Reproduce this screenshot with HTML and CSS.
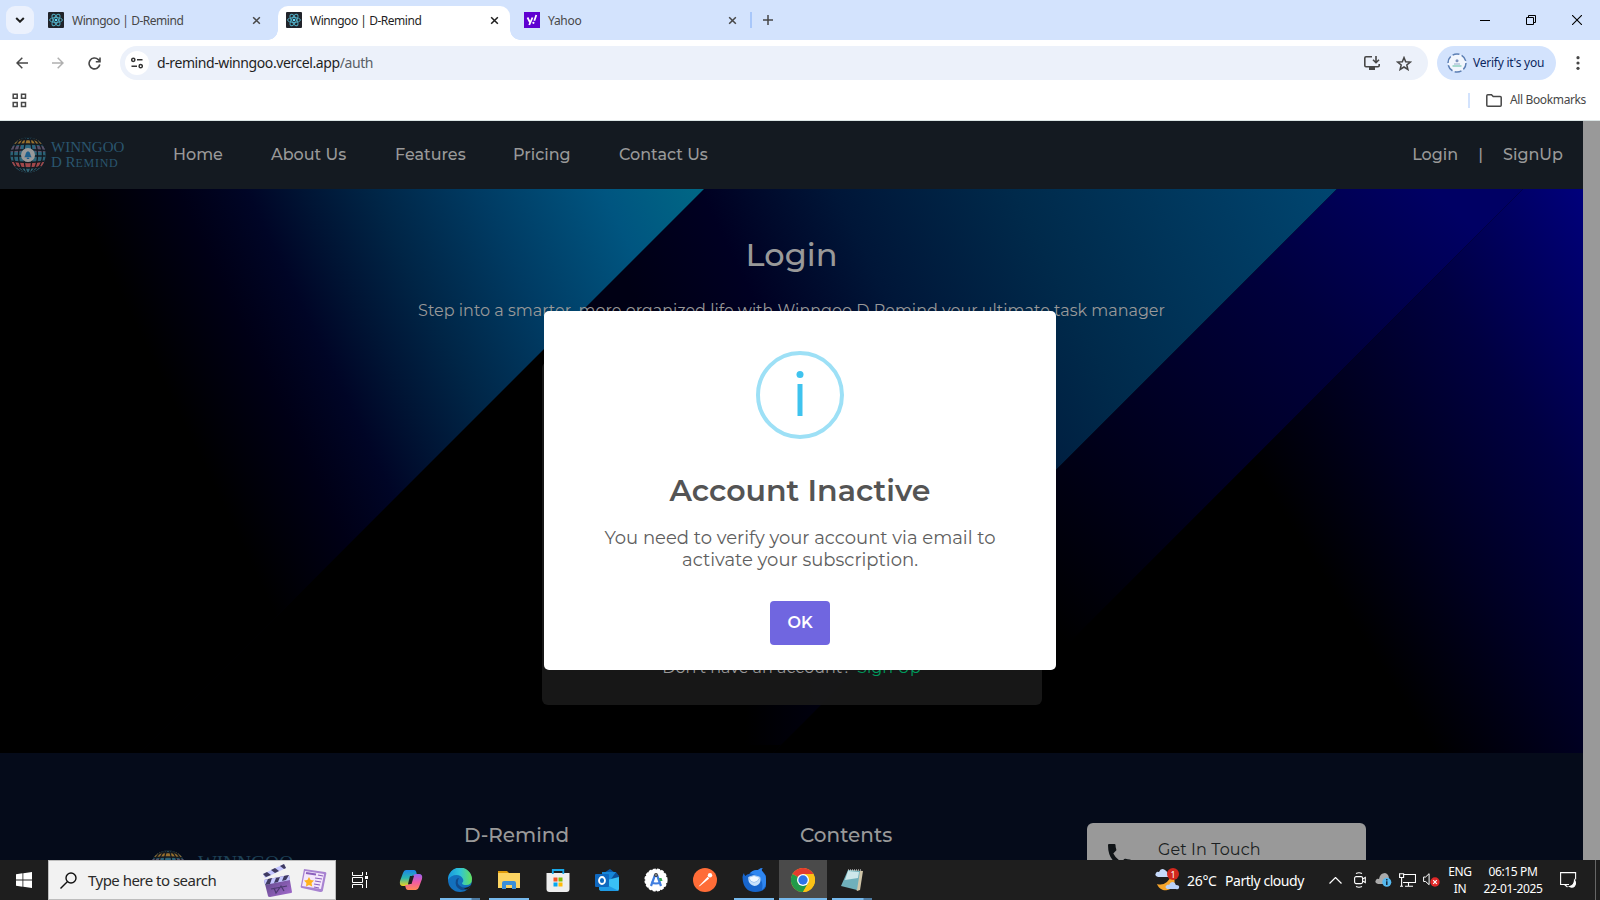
FILE: index.html
```html
<!DOCTYPE html>
<html lang="en">
<head>
<meta charset="utf-8">
<title>Winngoo | D-Remind</title>
<link rel="stylesheet" href="styles.css">
</head>
<body>
<svg class="defs" width="0" height="0">
  <defs>
    <symbol id="react" viewBox="0 0 16 16">
      <rect width="16" height="16" rx="1" fill="#20232a"/>
      <g fill="none" stroke="#4fa9bf" stroke-width="1">
        <ellipse cx="8" cy="8" rx="6.4" ry="2.5"/>
        <ellipse cx="8" cy="8" rx="6.4" ry="2.5" transform="rotate(60 8 8)"/>
        <ellipse cx="8" cy="8" rx="6.4" ry="2.5" transform="rotate(120 8 8)"/>
      </g>
      <circle cx="8" cy="8" r="1.3" fill="#61dafb"/>
    </symbol>
    <symbol id="close" viewBox="0 0 10 10"><path d="M1.3 1.3 8.7 8.7M8.7 1.3 1.3 8.7" fill="none" stroke="currentColor" stroke-width="1.7"/></symbol>
    <clipPath id="globeClip"><circle cx="18" cy="18" r="17.6"/></clipPath>
    <symbol id="globe" viewBox="0 0 36 36">
      <g clip-path="url(#globeClip)">
        <rect width="36" height="36" fill="#2b6276"/>
        <rect y="2" width="36" height="5" fill="#97702f"/>
        <rect y="9" width="36" height="6" fill="#5a4f68"/>
        <rect y="9" x="11" width="14" height="6" fill="#2c6680"/>
        <rect y="25" width="36" height="5" fill="#a0484b"/>
        <rect y="31" width="36" height="5" fill="#326475"/>
        <g fill="none" stroke="#141a21" stroke-width="1.3">
          <ellipse cx="18" cy="18" rx="14.5" ry="18"/><ellipse cx="18" cy="18" rx="9.5" ry="18"/><ellipse cx="18" cy="18" rx="4" ry="18"/>
          <path d="M0 8Q18 6 36 8M0 13.5Q18 12 36 13.5M0 19h36M0 24Q18 27 36 24M0 29Q18 33 36 29M5 4Q18 1 31 4"/>
        </g>
      </g>
      <circle cx="18" cy="18" r="7" fill="#999"/>
      <path d="M14.300 20.200c1.600-1.200.8-5.200 3.700-5.900 2.900.7 2.100 4.700 3.700 5.900zM16.800 20.800h2.400v1.200h-2.400z" fill="#1d5f8c"/>
    </symbol>
  </defs>
</svg>

<header class="browser">
  <div class="tabstrip">
    <button class="tab-search"><svg width="10" height="6" viewBox="0 0 10 6"><path d="M1.200 1 5 4.700 8.800 1" fill="none" stroke="#1f1f1f" stroke-width="2"/></svg></button>
    <div class="tab first"><svg width="16" height="16"><use href="#react"/></svg><span>Winngoo | D-Remind</span><svg class="x" width="9" height="9"><use href="#close"/></svg></div>
    <div class="tab active"><svg width="16" height="16"><use href="#react"/></svg><span>Winngoo | D-Remind</span><svg class="x" width="9" height="9"><use href="#close"/></svg></div>
    <div class="tab yahoo"><svg width="16" height="16" viewBox="0 0 16 16"><path fill="#5f01d1" d="M0 0h16v16H0z"/><path d="M3.500 5.500 6 10.300M8.500 5.500 5.200 13M12.300 3 10.300 8.700" fill="none" stroke="#fff" stroke-width="1.800"/><circle cx="9.400" cy="10.800" r="1.100" fill="#fff"/></svg><span>Yahoo</span><svg class="x" width="9" height="9"><use href="#close"/></svg></div>
    <i class="sep"></i>
    <svg class="plus" width="10" height="10" viewBox="0 0 10 10"><path d="M5 0v10M0 5h10" stroke="#474747" stroke-width="1.500"/></svg>
    <div class="winbtns">
      <svg width="10" height="10" viewBox="0 0 10 10"><path d="M0 5.500h10" stroke="#000"/></svg>
      <svg width="10" height="10" viewBox="0 0 10 10" fill="none" stroke="#000"><path d="M.5 2.500h7v7h-7zM2.500 2.500v-2h7v7h-2"/></svg>
      <svg width="10" height="10" viewBox="0 0 10 10"><path d="M0 0 10 10M10 0 0 10" stroke="#000" stroke-width="1.100"/></svg>
    </div>
  </div>
  <div class="toolbar">
    <svg width="12" height="12" viewBox="0 0 12 12" fill="none" stroke="#474747" stroke-width="1.500"><path d="M12 6H1M6.300.7 1 6l5.300 5.300"/></svg>
    <svg width="12" height="12" viewBox="0 0 12 12" fill="none" stroke="#b0b0b0" stroke-width="1.500"><path d="M0 6h11M5.700.7 11 6l-5.300 5.300"/></svg>
    <svg width="13" height="13" viewBox="0 0 13 13" fill="none" stroke="#474747" stroke-width="1.600"><path d="M11.800 7.500A5.400 5.400 0 1 1 10.300 2.600L11.700 4M12 .5v4.200H7.800"/></svg>
    <div class="omnibox">
      <span class="site"><svg width="12" height="12" viewBox="0 0 12 12" fill="none" stroke="#333" stroke-width="1.500"><circle cx="2.300" cy="2.800" r="1.600"/><path d="M6 2.800h5.500M.5 9.200H6"/><circle cx="9.700" cy="9.200" r="1.600"/></svg></span>
      <span class="url">d-remind-winngoo.vercel.app<em>/auth</em></span>
      <svg class="install" width="16" height="14" viewBox="0 0 16 14" fill="none" stroke="#474747" stroke-width="1.600"><path d="M8 .8H2Q.8.8.8 2v7.500q0 1.200 1.200 1.200h12q1.200 0 1.200-1.200V8M12 0v6M9 3.700l3 3 3-3"/><path d="M5 11h6v3H5z" fill="#474747" stroke="none"/></svg>
      <svg width="16" height="15" viewBox="0 0 16 15"><path d="m8 1.600 1.700 4.200 4.600.3-3.500 2.900 1.100 4.500L8 11l-3.900 2.500L5.200 9 1.700 6.100l4.600-.3z" fill="none" stroke="#474747" stroke-width="1.500"/></svg>
    </div>
    <div class="profile"><svg width="20" height="20" viewBox="0 0 20 20"><circle cx="10" cy="10" r="9" fill="#f2f6fd" stroke="#5c7fb4" stroke-width="1.500" stroke-dasharray="7 2.400"/><circle cx="10" cy="7.800" r="1.500" fill="#7d93bd"/><path d="M5.500 13h9" stroke="#8ed1bf" stroke-width="1.500"/><path d="M7 11h6" stroke="#9aaccc"/></svg><span>Verify it's you</span></div>
    <svg class="dots" width="4" height="14" viewBox="0 0 4 14" fill="#474747"><circle cx="2" cy="1.700" r="1.600"/><circle cx="2" cy="7" r="1.600"/><circle cx="2" cy="12.300" r="1.600"/></svg>
  </div>
  <div class="bookmarks">
    <svg width="15" height="15" viewBox="0 0 15 15" fill="none" stroke="#474747" stroke-width="1.500"><path d="M1.200 1.200h4v4h-4zM9.500 1.200h4v4h-4zM1.200 9.500h4v4h-4zM9.500 9.500h4v4h-4z"/></svg>
    <div class="all"><i></i><svg width="16" height="13" viewBox="0 0 16 13"><path d="M.8 11.200V1.800q0-1 1-1h3.700l1.700 1.800h7q1 0 1 1v7.600q0 1-1 1H1.800q-1 0-1-1z" fill="none" stroke="#474747" stroke-width="1.500"/></svg><span>All Bookmarks</span></div>
  </div>
</header>

<div class="viewport">
  <main class="page">
    <nav class="nav">
      <div class="brand"><svg width="36" height="36"><use href="#globe"/></svg><div class="brandname"><span class="b1">WINNGOO</span><span class="b2">D R<small>EMIND</small></span></div></div>
      <div class="links"><a class="n1">Home</a><a class="n2">About Us</a><a class="n3">Features</a><a class="n4">Pricing</a><a class="n5">Contact Us</a></div>
      <div class="auth"><a class="n6">Login</a><span>|</span><a class="n7">SignUp</a></div>
    </nav>
    <section class="hero">
      <svg class="rays" width="1583" height="564" viewBox="0 189 1583 564">
        <defs>
          <linearGradient id="g1" gradientUnits="userSpaceOnUse" x1="70" y1="189" x2="578" y2="-56"><stop offset="0" stop-color="#000"/><stop offset=".17" stop-color="#000016"/><stop offset=".28" stop-color="#000526"/><stop offset=".37" stop-color="#001434"/><stop offset=".48" stop-color="#002546"/><stop offset=".65" stop-color="#003b63"/><stop offset=".85" stop-color="#005580"/><stop offset="1" stop-color="#006685"/></linearGradient>
          <linearGradient id="g2" gradientUnits="userSpaceOnUse" x1="600" y1="230" x2="1200" y2="-67"><stop offset="0" stop-color="#000014"/><stop offset=".16" stop-color="#000022"/><stop offset=".34" stop-color="#001638"/><stop offset=".58" stop-color="#002a4b"/><stop offset=".85" stop-color="#003b62"/><stop offset="1" stop-color="#00456f"/></linearGradient>
          <linearGradient id="g3" gradientUnits="userSpaceOnUse" x1="1040" y1="620" x2="1430" y2="189"><stop offset="0" stop-color="#000"/><stop offset=".35" stop-color="#00001f"/><stop offset=".7" stop-color="#00003d"/><stop offset="1" stop-color="#000064"/></linearGradient>
          <linearGradient id="g4" gradientUnits="userSpaceOnUse" x1="1245" y1="454" x2="1606" y2="223"><stop offset="0" stop-color="#000"/><stop offset=".3" stop-color="#000022"/><stop offset=".6" stop-color="#000042"/><stop offset="1" stop-color="#00007c"/></linearGradient>
          <linearGradient id="g5" gradientUnits="userSpaceOnUse" x1="745" y1="0" x2="850" y2="0"><stop offset="0" stop-color="#000"/><stop offset="1" stop-color="#000014"/></linearGradient>
        </defs>
        <path fill="#000" d="M0 189h1583v564H0z"/>
        <path fill="url(#g2)" d="M704 189h633L773 753H140z"/>
        <path fill="#000" d="M544 349 140 753h633l20-20V349z"/>
        <path fill="url(#g5)" d="M745 640h141L781 745h-36z"/>
        <path fill="url(#g1)" d="M0 189h704L140 753H0z"/>
        <path fill="url(#g3)" d="M1337 189h186L959 753H773z"/>
        <path fill="url(#g4)" d="M1523 189h60v564H959z"/>
      </svg>
      <h1>Login</h1>
      <p class="lead">Step into a smarter, more organized life with Winngoo D Remind your ultimate task manager</p>
      <div class="card"><p><span class="q">Don't have an account?</span><a>Sign Up</a></p></div>
    </section>
    <footer class="footer">
      <div class="flogo"><svg width="36" height="36"><use href="#globe"/></svg><span>WINNGOO</span></div>
      <h2 class="f1">D-Remind</h2>
      <h2 class="f2">Contents</h2>
      <div class="touch"><svg width="23" height="23" viewBox="0 0 23 23"><path d="M0 1q0-1 1-1h5.500q1 0 1 1 0 2.500.8 4.500.2.800-.4 1.300L5.300 9.400q2.800 5.500 8.300 8.300l2.600-2.600q.600-.6 1.300-.4 2 .8 4.500.8 1 0 1 1V22q0 1-1 1Q0 22 0 1z" fill="#101417"/></svg><span>Get In Touch</span></div>
    </footer>
  </main>
  <div class="scroll"></div>
  <div class="modal">
    <svg class="info" width="88" height="88" viewBox="0 0 88 88"><circle cx="44" cy="44" r="42" fill="none" stroke="#9de0f6" stroke-width="4"/><circle cx="44" cy="23.500" r="3.500" fill="#3fc3ee"/><path d="M41.500 33h5v32h-5z" fill="#3fc3ee"/></svg>
    <h2>Account Inactive</h2>
    <p><span class="m1">You need to verify your account via email to</span><br><span class="m2">activate your subscription.</span></p>
    <button>OK</button>
  </div>
</div>

<footer class="taskbar">
  <div class="start"><svg width="16" height="16" viewBox="0 0 16 16" fill="#fff"><path d="M0 2.200 6.500 1.300v6.300H0zM7.300 1.200 16 0v7.600H7.300zM0 8.400h6.500v6.300L0 13.800zM7.300 8.400H16V16l-8.700-1.200z"/></svg></div>
  <div class="search">
    <svg width="17" height="17" viewBox="0 0 17 17" fill="none" stroke="#111" stroke-width="1.400"><circle cx="11" cy="6" r="5"/><path d="M7.300 9.700.5 16.500"/></svg>
    <span>Type here to search</span>
    <svg class="clap" width="30" height="33" viewBox="0 0 30 33"><defs><linearGradient id="cl" x2="1" y2="1"><stop stop-color="#57447f"/><stop offset="1" stop-color="#a56bd0"/></linearGradient></defs><path d="m1 10 21-10 2 4L3 14z" fill="#c4c6ff"/><path d="m1 10 4-2 4 3-5 2zM9 6l4-2 4 3-4 2zM18 2l4-2 2 4-2 1z" fill="#3f3a60"/><path d="m2 16 25-5 3 17q0 1-1 1L8 33q-2 0-2-1z" fill="url(#cl)"/><path d="m2 16 25-5 1 5-25 5z" fill="#c4c6ff"/><path d="m6 15 4-1-2 6-5 1zM14 14l4-1-2 5-4 1zM22 12l5-1-3 5-4 1z" fill="#3f3a60"/><path d="m9 25 16-3M12 24l2 5 5-7 3 5" stroke="#4c3a70" stroke-width="1.200" fill="none"/></svg>
    <svg class="news" width="27" height="25" viewBox="0 0 27 25"><path d="m4 1 21 3q2 0 1 3l-3 15q0 2-3 2L2 20q-2 0-1-3z" fill="#a883d1"/><path d="m5 3 19 3-3 15-19-3z" fill="#f3e6fb"/><path d="m6 5 10 1.600" stroke="#8b60bd" stroke-width="2"/><path d="m15 10 7 1M15 13l6 1M14 16l6 1M14 19l5 1M18 7l5 1" stroke="#8b60bd" stroke-width="1.200"/><path d="m9 9 1.600 3 3.400.5-2.500 2.400.7 3.500-3.200-1.500-3 1.500.4-3.500L4 12.500l3.400-.5z" fill="#ffb21c"/></svg>
  </div>
  <div class="apps">
    <div class="app"><svg width="16" height="16" viewBox="0 0 16 16" fill="none" stroke="#fff"><path d="M.5 0v3.500h10V0M.5 16v-3.500h10V16M.5 5.500h10v5H.5zM14.500 0v3M14.500 8v8"/><path d="M13 4h3v3h-3z" fill="#fff" stroke="none"/></svg></div>
    <div class="app"><svg width="24" height="24" viewBox="0 0 24 24"><defs><linearGradient id="cp" x2="0" y2="1"><stop stop-color="#1b83e8"/><stop offset=".5" stop-color="#2bb6b0"/><stop offset="1" stop-color="#f1d21d"/></linearGradient><linearGradient id="cq" x2="0" y2="1"><stop stop-color="#9a62f0"/><stop offset=".5" stop-color="#ef5aa5"/><stop offset="1" stop-color="#ff8a55"/></linearGradient></defs><path d="M7 2h8q2 0 2.500 3L18 7h-3q-2 0-3 3l-2 6q-1 2-3 2H4q-4 0-3-5l3-8q1-3 3-3z" fill="url(#cp)"/><path d="M17 22H9q-2 0-2.500-3L6 17h3q2 0 3-3l2-6q1-2 3-2h3q4 0 3 5l-3 8q-1 3-3 3z" fill="url(#cq)"/><path d="M11 8h4l-2.500 8H9z" fill="#1e1e1e"/></svg></div>
    <div class="app split"><svg width="24" height="24" viewBox="0 0 24 24"><defs><linearGradient id="e1"><stop stop-color="#1797dd"/><stop offset=".5" stop-color="#2fc4d8"/><stop offset="1" stop-color="#66e05a"/></linearGradient></defs><circle cx="12" cy="12" r="12" fill="#1370bd"/><path d="M0 12A12 12 0 0 1 24 11q0 6-6 6-4 0-4-2 2-1 1-4Q13 7 8.500 7 3 7 0 12z" fill="url(#e1)"/><path d="M8 12q-2 7 5 10 5 1 9-4-6 3-10 0-4-3-1-8-2 0-3 2z" fill="#114a8b"/><path d="M24 16.500 20 21q-2 1-4-.5 4-.5 8-4z" fill="#1e1e1e"/></svg></div>
    <div class="app run"><svg width="24" height="24" viewBox="0 0 24 24"><path d="M1 3h9l2 2v15H1z" fill="#e19d0c"/><path d="M1 5h22v15H1z" fill="#fcd462"/><path d="M5 20v-5q0-2 2-2h10q2 0 2 2v6h-4v-4H9v4H5z" fill="#3a8fd8"/></svg></div>
    <div class="app"><svg width="24" height="24" viewBox="0 0 24 24"><path d="M.5 5h23v16q0 3-3 3h-17q-3 0-3-3z" fill="#eee"/><path d="M7.500 9.500h4v4h-4z" fill="#f35325"/><path d="M12.500 9.500h4v4h-4z" fill="#81bc06"/><path d="M7.500 14.500h4v4h-4z" fill="#05a6f0"/><path d="M12.500 14.500h4v4h-4z" fill="#ffba08"/><path d="M6.800 6V2h10.500v4" fill="none" stroke="#18a8e8" stroke-width="1.800"/></svg></div>
    <div class="app"><svg width="24" height="24" viewBox="0 0 24 24"><path d="M4 8 15 1l9 7v4H4z" fill="#0b5bab"/><path d="M7 4h14v10H7z" fill="#1686d9"/><path d="m21 4 3 4-8 7-2-1z" fill="#0b4f98"/><path d="M4 14 24 9v12q0 2-2 2H7q-3 0-3-3z" fill="#39c0f5"/><path d="M4 13 24 23H7q-3 0-3-3z" fill="#1f9be6"/><rect y="6" width="14" height="13" rx="1" fill="#0f68bf"/><ellipse cx="7" cy="12.500" rx="3" ry="3.500" fill="none" stroke="#fff" stroke-width="1.800"/></svg></div>
    <div class="app"><svg width="24" height="24" viewBox="0 0 24 24"><circle cx="12" cy="12" r="10.800" fill="#fff" stroke="#fff" stroke-width="1.600" stroke-dasharray="3 1.300"/><path d="m11 7-4 11M13 7l4 11M7 14.500q5 2 10 0" stroke="#3f7de0" stroke-width="2.200" fill="none"/><circle cx="12" cy="7" r="1.900" fill="#333"/><circle cx="12" cy="7" r=".7" fill="#fff"/><path d="M15 10h2.500l1 3h-2.500z" fill="#36a852"/></svg></div>
    <div class="app"><svg width="24" height="24" viewBox="0 0 24 24"><circle cx="12" cy="12" r="12" fill="#ff6c37"/><path d="m5.500 18.500 8-8.500 1.500 1.500-8 6.500z" fill="#fff"/><path d="m14 9.500 1.500 1.500" stroke="#fff" stroke-width="2"/><circle cx="17" cy="7.300" r="2.200" fill="#fff"/></svg></div>
    <div class="app run"><svg width="24" height="24" viewBox="0 0 24 24"><path d="M.5 9q.5-3 1.500-4 0 2 1.500 3 1.500-2 3.500-2l2-1.500q3-3 7-2.500 2-2 5-2-2 1-1 3 5 4 5 10 0 11-11.500 11Q1 24 .5 9z" fill="#1765cc"/><path d="M8 5q3-3.500 8-3 2-2 5-2-2 1-1 3 5 5 4 12-1 5-4 7 2-9-4-13-4-3-8-4z" fill="#2f86f0"/><path d="M6.500 9q3-2 6-1.500 3 0 5.500 1.500 1.500 4-1 7-4 3.500-8 .5-3.500-3-2.500-7.500z" fill="#c9e2fb"/><path d="M6.500 9.500q2 5 5.500 5t6-5l-6-2z" fill="#f3f9ff" stroke="#90bcef" stroke-width=".8"/></svg></div>
    <div class="app chrome"><svg width="24" height="24" viewBox="0 0 24 24"><circle cx="12" cy="12" r="12" fill="#fbc116"/><path d="M12 12 1.600 6a12 12 0 0 1 20.800 0z" fill="#e33b2e"/><path d="M12 12 1.600 6A12 12 0 0 0 12 24l5.500-9z" fill="#219a4a"/><path d="M12 6h10.400A12 12 0 0 1 12 24l5-9z" fill="#fbc116"/><circle cx="12" cy="12" r="6" fill="#fff"/><circle cx="12" cy="12" r="4.700" fill="#2f73e8"/></svg></div>
    <div class="app split"><svg width="24" height="24" viewBox="0 0 24 24"><path d="m8 2 15 1-3 19-3 1z" fill="#cfc5a8"/><path d="m8 2 12 1-3 19L1 18z" fill="#6fb0bb"/><path d="m8 3 11 1-1 6L5 12z" fill="#cde7ea"/><path d="M8 2h13" stroke="#eee" stroke-dasharray="1 1"/></svg></div>
  </div>
  <div class="tray">
    <svg class="weather" width="25" height="24" viewBox="0 0 25 24"><path d="M17 7a9 9 0 1 1-15 9q9 3 15-9z" fill="#f6a52b"/><path d="M3 9q-4-1-2-4 1-2 3-1 2-5 6-2 3 2 3 4v3z" fill="#c6dafb"/><path d="M12 21q-3-2 0-4 1-1 2 0 2-5 6-2 0 1 1 2 4 0 3 3-1 2-3 1z" fill="#b8d0f8"/><circle cx="18" cy="6" r="6" fill="#d2281e"/><text x="18" y="9.500" text-anchor="middle" class="badge">1</text></svg>
    <span class="temp">26°C</span><span class="cond">Partly cloudy</span>
    <svg class="caret" width="13" height="7" viewBox="0 0 13 7"><path d="M.5 6.500l6-6 6 6" fill="none" stroke="#fff" stroke-width="1.200"/></svg>
    <svg class="cam" width="12" height="16" viewBox="0 0 12 16" fill="none" stroke="#fff" stroke-width="1.100"><rect x=".6" y="4.600" width="8" height="7" rx="1.500"/><path d="M8.600 7l2.700-1.500v5L8.600 9M2 1.500Q5 0 8 1.500M2 14.500q3 1.500 6 0"/></svg>
    <svg class="cloud" width="17" height="14" viewBox="0 0 17 14"><path d="M3 11q-4-1-2-4 1-2 3-1 1-6 6-6 4 1 4 6l-5 5z" fill="#aaa"/><circle cx="11.800" cy="9.200" r="4.500" fill="#55b9f0"/><path d="M11.800 6v1.500M11.800 8.300v3.700" stroke="#123" stroke-width="1.400"/></svg>
    <svg class="net" width="17" height="14" viewBox="0 0 17 14" fill="none" stroke="#fff" stroke-width="1.100"><path d="M5 1.500h11.500v8H4M9.500 9.500V13M6 13.200h8M.6.800h4v3.700h-4zM2.600 4.500V13M1 13.200h3"/></svg>
    <svg class="snd" width="17" height="14" viewBox="0 0 17 14"><path d="M.6 4h2l3.500-3.300v11L2.600 8.500h-2z" fill="none" stroke="#fff"/><circle cx="12" cy="9" r="4.700" fill="#e02828"/><path d="m10.200 7.200 3.600 3.600M13.800 7.200l-3.600 3.600" stroke="#fff" stroke-width="1.200"/></svg>
    <div class="lang"><span>ENG</span><span>IN</span></div>
    <div class="clock"><span>06:15 PM</span><span>22-01-2025</span></div>
    <svg class="note" width="17" height="16" viewBox="0 0 17 16" fill="none" stroke="#fff" stroke-width="1.100"><path d="M9 12.500H.6V.6h15v7M4.500 12.500 7.500 15"/><path d="M14.500 8q2 3 0 6-2 2-5 .5 5-1 5-6.500z" fill="#fff"/></svg>
  </div>
</footer>
</body>
</html>
```

FILE: styles.css
```css
* { box-sizing: border-box; }
body { margin: 0; width: 1600px; height: 900px; overflow: hidden; display: flex; flex-direction: column; font-family: "Segoe UI", "Noto Sans", sans-serif; background: #000; }
svg { display: block; flex: none; }
.defs { position: absolute; }
span, a, h1, h2 { white-space: nowrap; }
button { border: 0; padding: 0; font: inherit; }

/* Browser chrome */
.browser { height: 121px; flex: none; background: #fff; border-bottom: 1px solid #dce5e5; }
.tabstrip { height: 40px; background: #d3e3fd; display: flex; align-items: center; padding-left: 6px; }
.tab-search { width: 28px; height: 28px; border-radius: 9px; background: #ebf1fd; display: grid; place-items: center; }
.tab { flex: none; display: flex; align-items: center; font-size: 12px; color: #474747; letter-spacing: -.47px; height: 40px; }
.tab span { flex: 1; margin-left: 8px; }
.tab.first { width: 213px; margin-left: 14px; }
.tab.active { position: relative; width: 232px; height: 34px; margin: 6px 0 0 17px; padding: 0 11px 6px 8px; border-radius: 10px 10px 0 0; background: #fff; color: #1f1f1f; }
.tab.active::before, .tab.active::after { content: ""; position: absolute; bottom: 0; width: 10px; height: 10px; }
.tab.active::before { left: -10px; background: radial-gradient(circle at 0 0, #d3e3fd 9.500px, #fff 10px); }
.tab.active::after { right: -10px; background: radial-gradient(circle at 100% 0, #d3e3fd 9.500px, #fff 10px); }
.tab.yahoo { width: 213px; margin-left: 14px; letter-spacing: -.3px; }
.sep { width: 2px; height: 16px; margin-left: 13px; background: #a8c7fa; }
.plus { margin-left: 11px; }
.winbtns { margin-left: auto; display: flex; gap: 36px; padding-right: 18px; }
.toolbar { height: 46px; display: flex; align-items: center; padding-left: 16px; }
.toolbar > svg { margin-right: 24px; }
.omnibox { width: 1308px; height: 34px; margin-left: -5px; border-radius: 17px; background: #ecf1fa; display: flex; align-items: center; padding: 0 16px 0 5px; }
.site { width: 24px; height: 24px; border-radius: 50%; background: #fff; display: grid; place-items: center; margin-right: 8px; }
.url { flex: 1; font-size: 14px; color: #1f1f1f; letter-spacing: -.41px; padding-bottom: 1px; }
.url em { font-style: normal; color: #5a5f66; }
.install { margin-right: 16px; }
.profile { width: 119px; height: 34px; margin-left: 9px; border-radius: 17px; background: #d3e3fd; display: flex; align-items: center; padding-left: 10px; gap: 6px; font-size: 12px; letter-spacing: -.25px; color: #0b2760; }
.profile span { padding-bottom: 1px; }
.toolbar > .dots { margin: 0 0 0 20px; }
.bookmarks { height: 29px; display: flex; align-items: center; justify-content: space-between; padding: 0 14px 1px 12px; }
.all { display: flex; align-items: center; font-size: 12px; color: #474747; letter-spacing: -.37px; }
.all i { width: 2px; height: 15px; background: #d3e3fd; margin-right: 16px; }
.all span { margin-left: 8px; padding-bottom: 1px; }

/* Page */
.viewport { position: relative; height: 739px; flex: none; display: flex; overflow: hidden; font-family: Montserrat, Inter, sans-serif; }
.page { width: 1583px; height: 739px; overflow: hidden; }
.scroll { width: 17px; background: #999; }
.nav { height: 68px; background: #141a21; display: flex; align-items: center; color: #999; font-size: 16px; font-weight: 500; padding-left: 10px; }
.brand { display: flex; gap: 5px; width: 163px; }
.brandname { font-family: "Liberation Serif", serif; color: #2a566f; display: flex; flex-direction: column; font-size: 15px; line-height: 15px; padding-top: 3px; }
.brandname small { font-size: 12px; letter-spacing: .7px; }
.links { display: flex; gap: 48px; padding-bottom: 2px; }
.links a, .auth a { display: block; }
.n1 { width: 50px; }
.n2 { width: 76px; }
.n3 { width: 70px; }
.n4 { width: 58px; }
.n5 { width: 90px; }
.n6 { width: 46px; }
.n7 { width: 61px; }
.auth { display: flex; margin-left: auto; gap: 20px; padding: 0 19px 2px 0; }
.hero { position: relative; height: 564px; display: flex; flex-direction: column; align-items: center; color: #999; }
.rays { position: absolute; left: 0; top: 0; }
.hero h1 { position: relative; margin: 46px 0 0; font-size: 32px; line-height: 40px; font-weight: 500; }
.lead { position: relative; margin: 26px 0 0; font-size: 16px; line-height: 20px; white-space: nowrap; }
.card { position: relative; width: 500px; height: 343px; margin-top: 41px; border-radius: 6px; background: rgba(25, 25, 25, .92); display: flex; align-items: flex-end; justify-content: center; padding-bottom: 27px; font-size: 16px; line-height: 20px; font-weight: 400; }
.card p { margin: 0; display: flex; gap: 6px; }
.card a { color: #009a5d; }
.footer { height: 107px; position: relative; background: #050b1a; display: flex; align-items: flex-start; color: #999; padding-left: 150px; overflow: hidden; }
.flogo { width: 314px; margin-top: 97px; display: flex; gap: 12px; color: #1d4055; font: 20px/22px "Liberation Serif", serif; }
.flogo span { padding-top: 2px; letter-spacing: -.4px; }
.footer h2 { margin: 70px 0 0; font-size: 20px; line-height: 24px; font-weight: 500; }
.f1 { width: 336px; }
.f2 { width: 287px; }
.touch { width: 279px; height: 100px; margin-top: 70px; border-radius: 6px; background: #999; color: #1b1f22; display: flex; align-items: flex-start; padding: 21px 0 0 21px; font-size: 16px; line-height: 12px; gap: 27px; }
.touch span { letter-spacing: .1px; }

/* Alert */
.modal { position: absolute; left: 544px; top: 190px; width: 512px; height: 359px; border-radius: 5px; background: #fff; display: flex; flex-direction: column; align-items: center; color: #545454; }
.info { margin-top: 40px; }
.modal h2 { margin: 34px 0 0; font-size: 30px; line-height: 36px; font-weight: 600; }
.modal p { margin: 18px 0 0; font-size: 18px; line-height: 22px; text-align: center; color: #5e5e5e; }
.modal button { width: 60px; height: 44px; margin-top: 30px; border-radius: 4px; background: #7066e0; color: #fff; font-size: 16px; font-weight: 600; padding-bottom: 2px; }

/* Taskbar */
.taskbar { height: 40px; background: #1e1e1e; display: flex; color: #fff; }
.start { width: 48px; display: grid; place-items: center; }
.search { width: 288px; height: 40px; border: 1px solid #bdbdbd; background: #f2f2f2; display: flex; align-items: center; padding-left: 11px; color: #2a2a2a; font-size: 15px; }
.search span { width: 174px; margin-left: 11px; letter-spacing: -.52px; }
.news { margin-left: 8px; }
.apps { display: flex; gap: 9px; padding-left: 4px; }
.app { position: relative; width: 40px; height: 40px; display: grid; place-items: center; }
.app:first-child { margin-right: 2px; }
.run::after, .split::after, .chrome::after { content: ""; position: absolute; left: 0; right: 0; bottom: 0; height: 2px; background: #76b9ed; }
.split::after { background: linear-gradient(90deg, #76b9ed 31px, #4d7ba2 32px); }
.chrome { width: 48px; margin: 0 -4px; background: #4a4a4a; }
.tray { margin-left: auto; display: flex; align-items: center; padding-right: 18px; border-right: 1px solid #666; margin-right: 4px; font-size: 14px; }
.badge { font: 9px "Noto Sans", sans-serif; fill: #fff; }
.temp { margin-left: 7px; width: 38px; letter-spacing: -.3px; }
.cond { width: 104px; letter-spacing: -.45px; }
.cam { margin-left: 12px; }
.cloud { margin-left: 9px; }
.net { margin-left: 7px; }
.snd { margin-left: 7px; }
.lang, .clock { display: flex; flex-direction: column; text-align: center; font-size: 12px; line-height: 17px; letter-spacing: -.35px; margin-top: -1px; }
.lang { width: 24px; margin-left: 8px; align-items: center; }
.clock { width: 60px; margin: -1px 17px 0 11px; align-items: center; }
```
